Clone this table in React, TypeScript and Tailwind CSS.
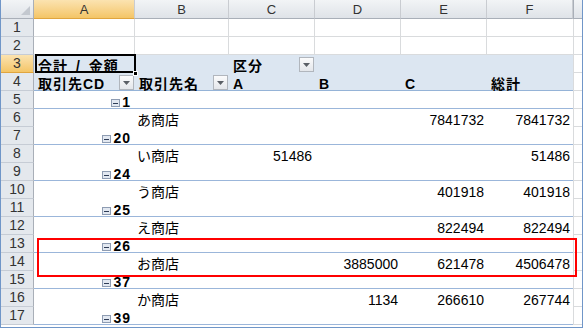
import type { ReactNode } from "react";

type ShopRow = { name: string; c?: string; d?: string; e?: string; f: string };
type PivotRow = { code: string } | ShopRow;

const pivotRows: PivotRow[] = [
  { code: "1" },
  { name: "あ商店", e: "7841732", f: "7841732" },
  { code: "20" },
  { name: "い商店", c: "51486", f: "51486" },
  { code: "24" },
  { name: "う商店", e: "401918", f: "401918" },
  { code: "25" },
  { name: "え商店", e: "822494", f: "822494" },
  { code: "26" },
  { name: "お商店", d: "3885000", e: "621478", f: "4506478" },
  { code: "37" },
  { name: "か商店", d: "1134", e: "266610", f: "267744" },
  { code: "39" },
];

const COLUMNS = ["A", "B", "C", "D", "E", "F"];

const TEXT = "h-full overflow-hidden whitespace-nowrap pt-[4px] text-[14px] leading-[14px]";
const PIVOT_HEAD = "bg-[#dce6f1]";
const GROUP_LINE = "border-b border-[#9bb6da]";

function ColHead({ label, active }: { label: string; active?: boolean }) {
  return (
    <div
      className={
        active
          ? "flex items-center justify-center border-r border-b border-r-[#c9ccd1] border-b-[#e0a53f] bg-linear-to-b from-[#fbe3b0] to-[#f4c566] text-[13px] leading-[19px] text-[#333]"
          : "flex items-center justify-center border-r border-b border-r-[#c9ccd1] border-b-[#a9afb8] bg-linear-to-b from-[#f2f4f6] to-[#dfe3e8] text-[13px] leading-[19px] text-[#333]"
      }
    >
      {label}
    </div>
  );
}

function RowHead({ n, active }: { n: number; active?: boolean }) {
  return (
    <div
      className={
        active
          ? "flex items-center justify-center border-r border-b border-r-[#a9afb8] border-b-[#e0a53f] bg-linear-to-b from-[#fbe3b0] to-[#f4c566] text-[14px] leading-[17px] text-[#333]"
          : "flex items-center justify-center border-r border-b border-r-[#a9afb8] border-b-[#c6ccd5] bg-[#e4e8ed] text-[14px] leading-[17px] text-[#333]"
      }
    >
      {n}
    </div>
  );
}

function FilterButton() {
  return (
    <span className="flex h-[15px] w-[15px] shrink-0 items-center justify-center border border-[#b1b6bd] bg-linear-to-b from-[#fbfbfc] to-[#e4e7eb]">
      <svg width="7" height="4" viewBox="0 0 7 4">
        <path d="M0 0h7L3.5 4z" fill="#5a5f66" />
      </svg>
    </span>
  );
}

function CollapseIcon() {
  return (
    <span className="mr-[2px] mb-[1px] flex h-[8px] w-[9px] items-center justify-center self-end border border-[#8e9cb2] bg-[#e2e8f1]">
      <span className="h-px w-[5px] bg-[#2f3d57]" />
    </span>
  );
}

// column G: the sliver left of the window edge
function EdgeCell() {
  return <div className="border-l border-b border-[#d9dbdd]" />;
}

function Num({ value, className = "" }: { value?: string; className?: string }) {
  return <div className={`${TEXT} pr-[3px] text-right ${className}`}>{value}</div>;
}

function GroupRow({ n, code }: { n: number; code: string }) {
  return (
    <>
      <RowHead n={n} />
      <div className={`flex h-full items-start justify-end pr-[4px] ${GROUP_LINE}`}>
        <CollapseIcon />
        <span className="pt-[4px] text-[14px] font-bold leading-[14px] tracking-[1px]">{code}</span>
      </div>
      <div className={GROUP_LINE} />
      <div className={GROUP_LINE} />
      <div className={GROUP_LINE} />
      <div className={GROUP_LINE} />
      <div className={GROUP_LINE} />
      <EdgeCell />
    </>
  );
}

function ShopLine({ n, row }: { n: number; row: ShopRow }) {
  return (
    <>
      <RowHead n={n} />
      <div />
      <div className={`${TEXT} pl-[2px]`}>{row.name}</div>
      <Num value={row.c} />
      <Num value={row.d} />
      <Num value={row.e} />
      <Num value={row.f} />
      <EdgeCell />
    </>
  );
}

function BlankRow({ n }: { n: number }) {
  return (
    <>
      <RowHead n={n} />
      {COLUMNS.map((c) => (
        <div key={c} className={c === "F" ? "border-b border-[#d9dbdd]" : "border-r border-b border-[#d9dbdd]"} />
      ))}
      <EdgeCell />
    </>
  );
}

function HeadCell({ children, filter, className = "" }: { children?: ReactNode; filter?: boolean; className?: string }) {
  return (
    <div className={`flex h-full items-end justify-between pr-[1px] ${PIVOT_HEAD} ${className}`}>
      <span className="self-start overflow-hidden whitespace-nowrap pt-[4px] pl-[4px] text-[14px] font-bold leading-[14px] tracking-[1px]">
        {children}
      </span>
      {filter && <FilterButton />}
    </div>
  );
}

export default function App() {
  return (
    <div className="h-[330px] w-[584px] overflow-hidden bg-white font-['Liberation_Sans','Noto_Sans_CJK_JP',sans-serif] text-black">
      <div className="relative h-[328px] w-[583px] overflow-hidden border-r border-b border-l border-[#7096c8]">
        <div className="grid grid-cols-[33px_101px_94px_86px_86px_86px_86px_9px] grid-rows-[19px_repeat(17,18px)]">
          {/* column headers */}
          <div className="relative border-r border-b border-r-[#a9afb8] border-b-[#a9afb8] bg-linear-to-b from-[#f2f4f6] to-[#dfe3e8]">
            <svg className="absolute right-[3px] bottom-[3px]" width="9" height="9" viewBox="0 0 9 9">
              <path d="M9 0v9H0z" fill="#c3c8cf" />
            </svg>
          </div>
          {COLUMNS.map((c) => (
            <ColHead key={c} label={c} active={c === "A"} />
          ))}
          <div className="border-b border-l border-[#a9afb8] bg-linear-to-b from-[#f2f4f6] to-[#dfe3e8]" />

          <BlankRow n={1} />
          <BlankRow n={2} />

          {/* pivot header */}
          <RowHead n={3} active />
          <div className={`relative ${PIVOT_HEAD}`}>
            <span className="block overflow-hidden whitespace-nowrap pt-[4px] pl-[4px] text-[14px] font-bold leading-[14px] tracking-[1px] [word-spacing:3px]">
              合計 / 金額
            </span>
            <div className="absolute -top-px left-px -right-px bottom-0 border-2 border-black" />
            <div className="absolute -right-[3px] -bottom-[3px] h-[5px] w-[5px] border border-white bg-black" />
          </div>
          <HeadCell />
          <HeadCell filter className="pb-[1px]">
            区分
          </HeadCell>
          <HeadCell />
          <HeadCell />
          <HeadCell />
          <div className="border-l border-b border-[#d9dbdd]" />

          <RowHead n={4} />
          <HeadCell filter className="border-b border-[#95b3d7]">
            取引先CD
          </HeadCell>
          <HeadCell filter className="border-b border-[#95b3d7]">
            取引先名
          </HeadCell>
          <HeadCell className="border-b border-[#95b3d7]">A</HeadCell>
          <HeadCell className="border-b border-[#95b3d7]">B</HeadCell>
          <HeadCell className="border-b border-[#95b3d7]">C</HeadCell>
          <HeadCell className="border-b border-[#95b3d7]">総計</HeadCell>
          <EdgeCell />

          {pivotRows.map((row, i) =>
            "code" in row ? (
              <GroupRow key={i} n={i + 5} code={row.code} />
            ) : (
              <ShopLine key={i} n={i + 5} row={row} />
            ),
          )}
        </div>

        <div className="pointer-events-none absolute top-[238px] left-[36px] h-[39px] w-[540px] border-2 border-[#ff0000]" />
      </div>
    </div>
  );
}
